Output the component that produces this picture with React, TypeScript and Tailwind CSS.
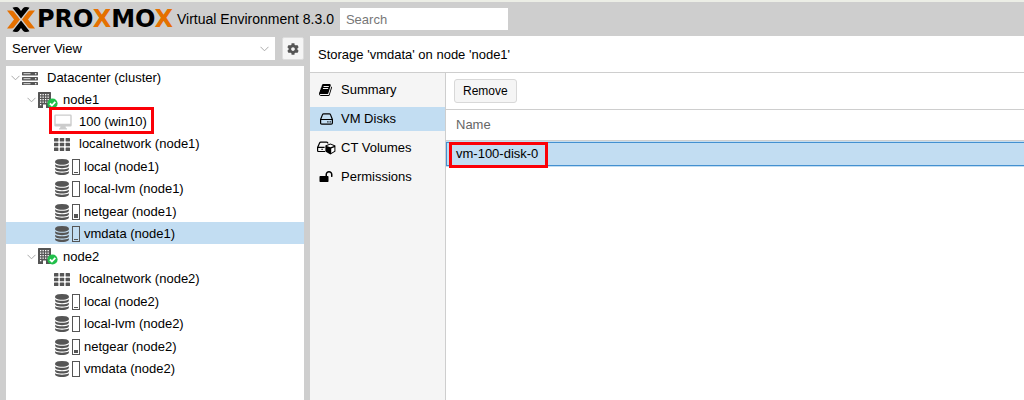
import type { ReactNode } from 'react'
import clsx from 'clsx'
import { FaCog } from 'react-icons/fa'

type NodeKind = 'cluster' | 'node' | 'vm' | 'network' | 'storage'

type TreeItem = {
  label: string
  kind: NodeKind
  usage?: number
  selected?: boolean
  marked?: boolean
}

const tree: TreeItem[] = [
  { label: 'Datacenter (cluster)', kind: 'cluster' },
  { label: 'node1', kind: 'node' },
  { label: '100 (win10)', kind: 'vm', marked: true },
  { label: 'localnetwork (node1)', kind: 'network' },
  { label: 'local (node1)', kind: 'storage', usage: 1 },
  { label: 'local-lvm (node1)', kind: 'storage', usage: 0 },
  { label: 'netgear (node1)', kind: 'storage', usage: 4 },
  { label: 'vmdata (node1)', kind: 'storage', usage: 1, selected: true },
  { label: 'node2', kind: 'node' },
  { label: 'localnetwork (node2)', kind: 'network' },
  { label: 'local (node2)', kind: 'storage', usage: 1 },
  { label: 'local-lvm (node2)', kind: 'storage', usage: 0 },
  { label: 'netgear (node2)', kind: 'storage', usage: 3 },
  { label: 'vmdata (node2)', kind: 'storage', usage: 0 },
]

const indent: Record<NodeKind, string> = {
  cluster: 'pl-[5px]',
  node: 'pl-[21px]',
  vm: 'pl-[37px]',
  network: 'pl-[37px]',
  storage: 'pl-[37px]',
}

function ProxmoxMark() {
  return (
    <svg width="28" height="25" viewBox="0 0 28 25" aria-hidden="true">
      <path d="M5.500.8Q7 0 9 0q2 0 3 1.200L14 4l2-2.800Q17 0 19 0q2 0 3.500.8L14 11.500z" fill="#000" />
      <path d="M5.500 24.200Q7 25 9 25q2 0 3-1.200l2-2.800 2 2.800q1 1.200 3 1.200 2 0 3.500-.8L14 13.500z" fill="#000" />
      <path d="M0 3.500h4q2 0 3 1.200l6 7.800-6 7.800q-1 1.200-3 1.200H0l7-9z" fill="#e57000" />
      <path d="M28 3.500h-4q-2 0-3 1.200l-6 7.800 6 7.800q1 1.200 3 1.200h4l-7-9z" fill="#e57000" />
    </svg>
  )
}

function Logo() {
  return (
    <div className="flex items-center">
      <ProxmoxMark />
      <span className="ml-[2px] w-[139px] font-['DejaVu_Sans'] text-2xl leading-6 font-bold text-black">
        PRO<span className="text-[#e57000]">X</span>MO<span className="text-[#e57000]">X</span>
      </span>
    </div>
  )
}

function Caret() {
  return (
    <svg width="9" height="6" viewBox="0 0 9 6" fill="none" stroke="#aaa" aria-hidden="true">
      <path d="M.5.800l4 4 4-4" />
    </svg>
  )
}

function ServerIcon() {
  return (
    <svg width="16" height="13" viewBox="0 0 16 13" aria-hidden="true">
      {[0, 5, 10].map((y) => (
        <g key={y}>
          <rect y={y} width="16" height="3.400" rx=".6" fill="#555" />
          <path d={`M1.500 ${y + 1.700}h7`} stroke="#ddd" strokeWidth="1" />
          <circle cx="13.700" cy={y + 1.700} r=".8" fill="#fff" />
        </g>
      ))}
    </svg>
  )
}

function NodeIcon() {
  return (
    <svg width="20" height="17" viewBox="0 0 20 17" aria-hidden="true">
      <path d="M.5 0h12q.5 0 .5.5V16H0V.5Q0 0 .5 0z" fill="#555" />
      <g fill="#fff">
        {[2, 4.500, 7, 9.500].map((y) =>
          [2, 4.500, 7, 9.500].map((x) => <rect key={`${x}-${y}`} x={x} y={y} width="1.300" height="1.300" />),
        )}
        <rect x="2" y="12" width="1.300" height="1.300" />
        <path d="M5 12.500h3V16H5z" />
      </g>
      <circle cx="14.500" cy="11.500" r="5.100" fill="#21bf4b" />
      <path d="M11.900 11.500l2 2 3.400-3.600" fill="none" stroke="#fff" strokeWidth="1.800" />
    </svg>
  )
}

function VmIcon() {
  return (
    <svg width="18" height="16" viewBox="0 0 18 16" fill="#ccc" aria-hidden="true">
      <path
        fillRule="evenodd"
        d="M1.500.5h15q1.200 0 1.200 1.200v9.600q0 1.200-1.200 1.200h-5l.5 1.800h1v1.200H5v-1.200h1l.5-1.800h-5Q.3 12.500.3 11.300V1.700Q.3.5 1.500.5zm.2 1.200v8h14.600v-8z"
      />
    </svg>
  )
}

function NetworkIcon() {
  return (
    <svg width="16" height="13" viewBox="0 0 16 13" fill="#555" aria-hidden="true">
      {[0, 4.700, 9.400].map((y) =>
        [0, 5.800, 11.600].map((x) => <rect key={`${x}-${y}`} x={x} y={y} width="4.400" height="3.500" rx=".5" />),
      )}
    </svg>
  )
}

function DatabaseIcon() {
  return (
    <svg width="14" height="16" viewBox="0 0 1536 1792" fill="#555" aria-hidden="true">
      <path d="M768 768q237 0 443-43t325-127v170q0 69-103 128t-280 93.500-385 34.500-385-34.500-280-93.500-103-128v-170q119 84 325 127t443 43zm0 768q237 0 443-43t325-127v170q0 69-103 128t-280 93.500-385 34.500-385-34.500-280-93.500-103-128v-170q119 84 325 127t443 43zm0-384q237 0 443-43t325-127v170q0 69-103 128t-280 93.500-385 34.500-385-34.500-280-93.500-103-128v-170q119 84 325 127t443 43zm0-1152q208 0 385 34.500t280 93.500 103 128v128q0 69-103 128t-280 93.500-385 34.500-385-34.500-280-93.500-103-128v-128q0-69 103-128t280-93.500 385-34.500z" />
    </svg>
  )
}

function StorageIcon({ usage }: { usage: number }) {
  return (
    <>
      <DatabaseIcon />
      <span className="ml-[3px] flex h-4 w-2 items-end border border-[#555] p-px">
        <span className="w-full bg-[#555]" style={{ height: usage }} />
      </span>
    </>
  )
}

function TreeIcon({ item }: { item: TreeItem }) {
  switch (item.kind) {
    case 'cluster':
      return <ServerIcon />
    case 'node':
      return <NodeIcon />
    case 'vm':
      return <VmIcon />
    case 'network':
      return <NetworkIcon />
    default:
      return <StorageIcon usage={item.usage ?? 0} />
  }
}

function TreeRow({ item }: { item: TreeItem }) {
  const isStorage = item.kind === 'storage'
  const hasChildren = item.kind === 'cluster' || item.kind === 'node'

  return (
    <li
      className={clsx(
        'relative flex h-[22px] items-center pt-[2px] nth-[2n+5]:h-[23px]',
        indent[item.kind],
        item.selected && 'bg-[#c2ddf2]',
      )}
    >
      <span className="flex w-[11px] shrink-0">{hasChildren && <Caret />}</span>
      <span className={clsx('flex shrink-0 items-center', isStorage ? 'w-[30px] pl-px' : 'w-[25px]')}>
        <TreeIcon item={item} />
      </span>
      <span className="whitespace-nowrap">{item.label}</span>
      {item.marked && (
        <span className="absolute -top-[3px] left-[43px] h-[27px] w-[105px] border-[3px] border-[#fb0007]" />
      )}
    </li>
  )
}

function BookIcon() {
  return (
    <svg width="14" height="14" viewBox="0 0 1792 1792" fill="currentColor" aria-hidden="true">
      <path d="M1639 478q40 57 18 129l-275 906q-19 64-76.500 107.500t-122.500 43.500h-923q-77 0-148.500-53.500t-99.500-131.500q-24-67-2-127 0-4 3-27t4-37q1-8-3-21.500t-3-19.500q2-11 8-21t16.500-23.500 16.500-23.500q23-38 45-91.500t30-91.500q3-10 .5-30t-.5-28q3-11 17-28t17-23q21-36 42-92t25-90q1-9-2.500-32t.5-28q4-13 22-30.500t22-22.500q19-26 42.500-84.500t27.500-96.500q1-8-3-25.500t-2-26.500q2-8 9-18t18-23 17-21q8-12 16.500-30.500t15-35 16-36 19.500-32 26.500-23.500 36-11.500 47.500 5.500l-1 3q38-9 51-9h761q74 0 114 56t18 130l-274 906q-36 119-71.500 153.500t-128.500 34.500h-869q-27 0-38 15-11 16-1 43 24 70 144 70h923q29 0 56-15.500t35-41.500l300-987q7-22 5-57 38 15 59 43zm-1064 2q-4 13 2 22.500t20 9.500h608q13 0 25.500-9.500t16.500-22.500l21-64q4-13-2-22.500t-20-9.500h-608q-13 0-25.500 9.500t-16.500 22.500zm-83 256q-4 13 2 22.500t20 9.500h608q13 0 25.500-9.500t16.500-22.500l21-64q4-13-2-22.500t-20-9.500h-608q-13 0-25.500 9.500t-16.500 22.500z" />
    </svg>
  )
}

function DiskIcon() {
  return (
    <svg width="13" height="12" viewBox="0 0 13 12" fill="none" stroke="currentColor" aria-hidden="true">
      <path d="M.6 6.500h11.800v3.400q0 1.200-1.200 1.200H1.800Q.6 11.100.6 9.900zL2.500 1.600Q2.800.8 3.700.8h5.600q.9 0 1.200.8l1.900 4.900" strokeWidth="1.200" />
      <path d="M7.300 8.900h1.200M9.600 8.900h1.200" strokeWidth="1.200" />
    </svg>
  )
}

function VolumeIcon() {
  return (
    <svg width="19" height="14" viewBox="0 0 19 14" aria-hidden="true">
      <path d="M8 10.500H1.700Q.6 10.500.6 9.400V6.300h7M.7 6.300l2-4.500Q3 1.100 3.900 1.100h5.600q.8 0 1.200.7l.4.800M4.500 8.400h1.200" fill="none" stroke="#000" strokeWidth="1.200" />
      <path d="M13.400 2.500l5 2v6l-5 3-5-3v-6z" fill="#000" />
      <path d="M13.400 3.600l3.600 1.300-3.600 1.400-3.600-1.400zM14.200 7.500l3.200-1.300v3.700l-3.200 2z" fill="#fff" />
    </svg>
  )
}

function UnlockIcon() {
  return (
    <svg width="14" height="14" viewBox="0 0 1792 1792" fill="currentColor" aria-hidden="true">
      <path d="M1728 576v256q0 26-19 45t-45 19h-64q-26 0-45-19t-19-45v-256q0-106-75-181t-181-75-181 75-75 181v192h96q40 0 68 28t28 68v576q0 40-28 68t-68 28h-960q-40 0-68-28t-28-68v-576q0-40 28-68t68-28h672v-192q0-185 131.500-316.500t316.500-131.500 316.500 131.500 131.500 316.500z" />
    </svg>
  )
}

const tabs: { label: string; icon: ReactNode; active?: boolean }[] = [
  { label: 'Summary', icon: <BookIcon /> },
  { label: 'VM Disks', icon: <DiskIcon />, active: true },
  { label: 'CT Volumes', icon: <VolumeIcon /> },
  { label: 'Permissions', icon: <UnlockIcon /> },
]

function Header() {
  return (
    <header className="flex h-[34px] items-center pl-[7px]">
      <Logo />
      <span className="ml-px text-sm whitespace-nowrap">Virtual Environment 8.3.0</span>
      <input
        type="search"
        aria-label="Search"
        placeholder="Search"
        className="ml-[6px] h-[22px] w-[168px] bg-white px-[6px] text-[13px] outline-none placeholder:text-[#777]"
      />
    </header>
  )
}

function ResourcePanel() {
  return (
    <aside className="flex w-[298px] shrink-0 flex-col">
      <div className="flex gap-[7px] pt-px pb-[6px]">
        <div className="relative flex flex-1 items-center">
          <select
            aria-label="View"
            className="h-[23px] w-full appearance-none bg-white px-[6px] text-[13px] outline-none"
          >
            <option>Server View</option>
          </select>
          <span className="pointer-events-none absolute right-[6px]">
            <Caret />
          </span>
        </div>
        <button
          type="button"
          aria-label="Tree settings"
          className="flex h-[23px] w-[22px] items-center justify-center rounded-[2px] border border-[#ddd] bg-[#f5f5f5] text-[#555]"
        >
          <FaCog size={12} />
        </button>
      </div>
      <ul className="flex-1 bg-white">
        {tree.map((item) => (
          <TreeRow key={item.label} item={item} />
        ))}
      </ul>
    </aside>
  )
}

function StorageTabs() {
  return (
    <nav className="flex w-[136px] shrink-0 flex-col gap-[5px] border-r border-[#cecece] bg-[#f5f5f5] pt-[5px]">
      {tabs.map((tab) => (
        <a
          key={tab.label}
          href="#"
          className={clsx('flex h-6 items-center', tab.active && 'bg-[#c2ddf2]')}
        >
          <span className="flex w-[31px] items-center justify-center pl-px">{tab.icon}</span>
          {tab.label}
        </a>
      ))}
    </nav>
  )
}

function DiskTable() {
  return (
    <table className="w-full border-collapse text-left">
      <thead>
        <tr className="h-[30px] border-b border-[#cecece]">
          <th className="px-[10px] font-normal text-[#666]">Name</th>
        </tr>
      </thead>
      <tbody>
        <tr>
          <td className="bg-[#c2ddf2] py-px">
            <div className="relative flex h-6 items-center border-y border-l border-[#4390d0] px-[9px]">
              vm-100-disk-0
              <span className="absolute -top-px left-[2px] h-[26px] w-[99px] border-[3px] border-[#fb0007]" />
            </div>
          </td>
        </tr>
      </tbody>
    </table>
  )
}

export default function App() {
  return (
    <div className="flex min-h-screen flex-col border-t-2 border-[#eceee6] bg-[#cecece] font-['Liberation_Sans',Arial,sans-serif] text-[13px] leading-4 text-black">
      <Header />
      <div className="flex flex-1 gap-[6px] pl-[6px]">
        <ResourcePanel />
        <main className="flex min-w-0 flex-1 flex-col bg-white">
          <h1 className="flex h-[37px] items-center border-b border-[#cecece] px-2 pt-[2px]">
            Storage 'vmdata' on node 'node1'
          </h1>
          <div className="flex flex-1">
            <StorageTabs />
            <section className="min-w-0 flex-1">
              <div className="flex h-[37px] items-center border-b border-[#cecece] px-2">
                <button type="button" className="h-6 rounded-[3px] border border-[#d8d8d8] bg-[#f5f5f5] px-2 text-xs">
                  Remove
                </button>
              </div>
              <DiskTable />
            </section>
          </div>
        </main>
      </div>
    </div>
  )
}
